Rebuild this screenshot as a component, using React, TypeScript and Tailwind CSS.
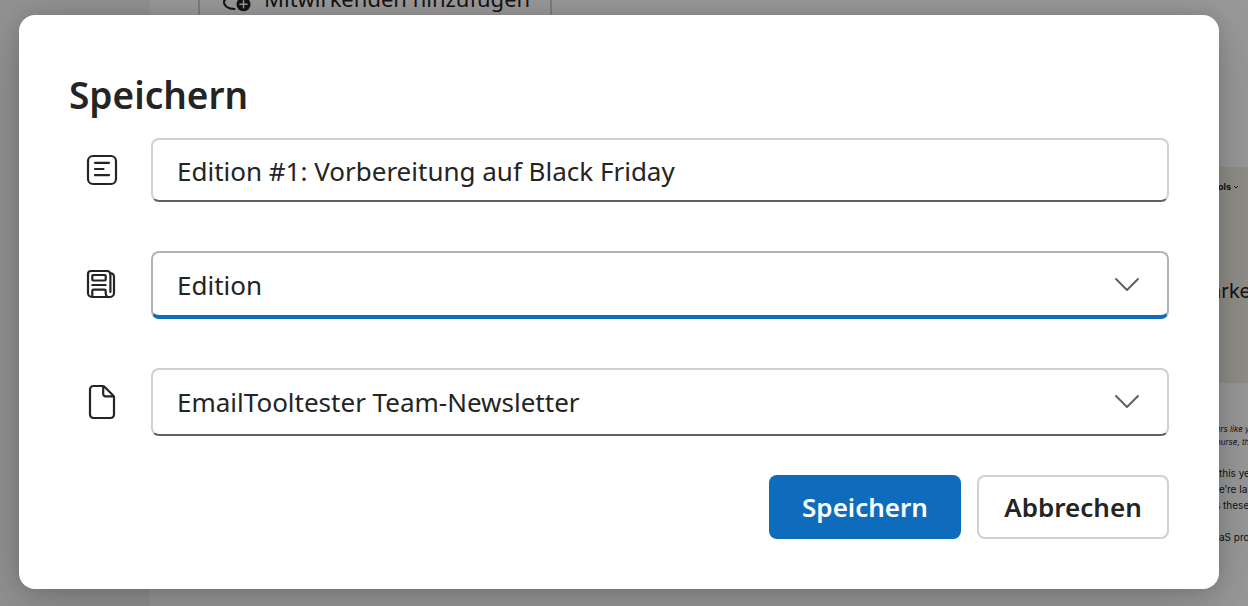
import { useState } from 'react';
import type { ReactNode } from 'react';

function TitleIcon() {
  return (
    <svg className="w-9 h-9" viewBox="0 0 36 36" fill="none" stroke="currentColor" strokeWidth="2.2" strokeLinecap="round">
      <rect x="4" y="4" width="28" height="28" rx="5" />
      <path d="M11 10.8h14M11 17h8.5M11 23.2h14" />
    </svg>
  );
}

function EditionIcon() {
  return (
    <svg className="w-9 h-9" viewBox="0 0 36 36" fill="none" stroke="currentColor" strokeWidth="2.2" strokeLinecap="round" strokeLinejoin="round">
      <path d="M26 6.5A2.5 2.5 0 0 0 23.5 4H7a3 3 0 0 0-3 3v19a4 4 0 0 0 4 4h18a4 4 0 0 0 4-4V9.500a3 3 0 0 0-3.600-3" />
      <path d="M26.400 6.500v18.500" />
      <rect x="8.300" y="8" width="13.400" height="5.500" rx="1" />
      <path d="M8.300 18h13.400" />
      <path d="M8.300 29.500V24a1.300 1.300 0 0 1 1.300-1.300h10.800a1.300 1.300 0 0 1 1.300 1.300v2.500q0 2.500 2 3.500" />
    </svg>
  );
}

function DocumentIcon() {
  return (
    <svg className="w-9 h-9" viewBox="0 0 36 36" fill="none" stroke="currentColor" strokeWidth="2.2" strokeLinejoin="round">
      <path d="M9.5 2h9.3a2 2 0 0 1 1.4.6l9.2 9.2a2 2 0 0 1 .6 1.4v17.3a3.5 3.5 0 0 1-3.5 3.5h-17A3.5 3.5 0 0 1 6 30.5V5.5A3.5 3.5 0 0 1 9.5 2z" />
      <path d="M19.2 2.2V10a2.3 2.3 0 0 0 2.3 2.3h8.2" />
    </svg>
  );
}

function PersonAddIcon() {
  return (
    <svg className="w-8 h-8" viewBox="0 0 32 32" fill="none" stroke="currentColor" strokeWidth="2" strokeLinecap="round">
      <path d="M14 17H5a3 3 0 0 0-3 3c0 4 4 7 10.500 7" />
      <circle cx="21.500" cy="22.300" r="7" fill="currentColor" stroke="none" />
      <path d="M21.500 18.800v7M18 22.300h7" stroke="#fff" strokeWidth="1.500" />
    </svg>
  );
}

function ChevronIcon() {
  return (
    <svg className="col-start-1 row-start-1 justify-self-end mr-7 w-7 h-7 text-[#616161] pointer-events-none" viewBox="0 0 28 28" fill="none" stroke="currentColor" strokeWidth="2" strokeLinecap="round" strokeLinejoin="round">
      <path d="M3 8l11 11L25 8" />
    </svg>
  );
}

function Field({ icon, children }: { icon: ReactNode; children: ReactNode }) {
  return (
    <div className="flex items-center gap-4">
      <span className="flex justify-center w-[66px] shrink-0">{icon}</span>
      <div className="grid flex-1 items-center min-w-0">{children}</div>
    </div>
  );
}

function Background() {
  return (
    <div className="absolute inset-0 flex overflow-hidden bg-white" aria-hidden="true">
      <div className="w-[150px] shrink-0 bg-[#f3f3f3]" />
      <div className="flex-1 pl-12">
        <button tabIndex={-1} className="-mt-[42px] flex h-20 items-center gap-2.5 rounded-lg border-2 border-[#d1d1d1] pl-[22px] pr-5 text-[22px]">
          <PersonAddIcon />
          Mitwirkenden hinzufügen
        </button>
      </div>
      {/* Newsletter preview */}
      <div className="w-9 shrink-0 whitespace-nowrap pt-[167px] font-['Inter',sans-serif]">
        <div className="h-[216px] bg-[#f0ede3] pl-[6px] pt-3.5">
          <p className="flex items-center text-[9px] leading-3 font-bold">
            ols
            <svg className="ml-0.5 w-1.5 h-1.5" viewBox="0 0 6 6" fill="none" stroke="currentColor"><path d="M1 2l2 2 2-2" /></svg>
          </p>
          <p className="mt-[82px] -ml-2 text-xl leading-8">arke</p>
        </div>
        <div className="pl-1 pt-10 text-[8px] leading-[13px] italic">
          <p>ers like y</p>
          <p>ourse, th</p>
        </div>
        <div className="pl-[7px] pt-4 text-[10px] leading-4">
          <p>this ye</p>
          <p>e’re la</p>
          <p className="-ml-1">s these</p>
          <p className="pt-4">aS pro</p>
        </div>
      </div>
    </div>
  );
}

export default function App() {
  const [title, setTitle] = useState('Edition #1: Vorbereitung auf Black Friday');
  const [type, setType] = useState('Edition');
  const [newsletter, setNewsletter] = useState('EmailTooltester Team-Newsletter');

  return (
    <div className="relative min-h-screen overflow-hidden text-[#242424] font-['Noto_Sans','Open_Sans',sans-serif]">
      <Background />

      {/* Dialog */}
      <div className="relative min-h-screen bg-black/40 pl-[19px] pr-[29px] pt-[15px] pb-4">
        <form
          role="dialog"
          aria-labelledby="dialog-title"
          onSubmit={(e) => e.preventDefault()}
          className="rounded-2xl bg-white px-[50px] pt-[52px] pb-[50px] shadow-[0_16px_56px_rgba(0,0,0,0.2),0_0_16px_rgba(0,0,0,0.12)]"
        >
          <h1 id="dialog-title" className="mb-[15px] text-[37px] leading-[56px] font-semibold">Speichern</h1>

          <div className="flex flex-col gap-[49px]">
            <Field icon={<TitleIcon />}>
              <input
                type="text"
                aria-label="Titel"
                value={title}
                onChange={(e) => setTitle(e.target.value)}
                className="h-16 w-full rounded-lg border-2 border-[#d1d1d1] border-b-[#616161] bg-white px-6 pt-0.5 text-[26px] outline-none"
              />
            </Field>

            <Field icon={<EditionIcon />}>
              <select
                aria-label="Typ"
                value={type}
                onChange={(e) => setType(e.target.value)}
                className="col-start-1 row-start-1 h-[68px] w-full appearance-none rounded-lg border-2 border-b-4 border-[#b3b3b3] border-b-[#0f6cbd] bg-white px-6 pt-0.5 text-[26px] outline-none"
              >
                <option>Edition</option>
              </select>
              <ChevronIcon />
            </Field>

            <Field icon={<DocumentIcon />}>
              <select
                aria-label="Newsletter"
                value={newsletter}
                onChange={(e) => setNewsletter(e.target.value)}
                className="col-start-1 row-start-1 h-[68px] w-full appearance-none rounded-lg border-2 border-[#d1d1d1] border-b-[#616161] bg-white px-6 text-[26px] outline-none"
              >
                <option>EmailTooltester Team-Newsletter</option>
              </select>
              <ChevronIcon />
            </Field>
          </div>

          <div className="mt-[39px] flex justify-end gap-4 text-[26px] font-semibold">
            <button type="submit" className="h-16 min-w-48 rounded-lg bg-[#0f6cbd] text-white">Speichern</button>
            <button type="button" className="h-16 min-w-48 rounded-lg border-2 border-[#d1d1d1] bg-white">Abbrechen</button>
          </div>
        </form>
      </div>
    </div>
  );
}
